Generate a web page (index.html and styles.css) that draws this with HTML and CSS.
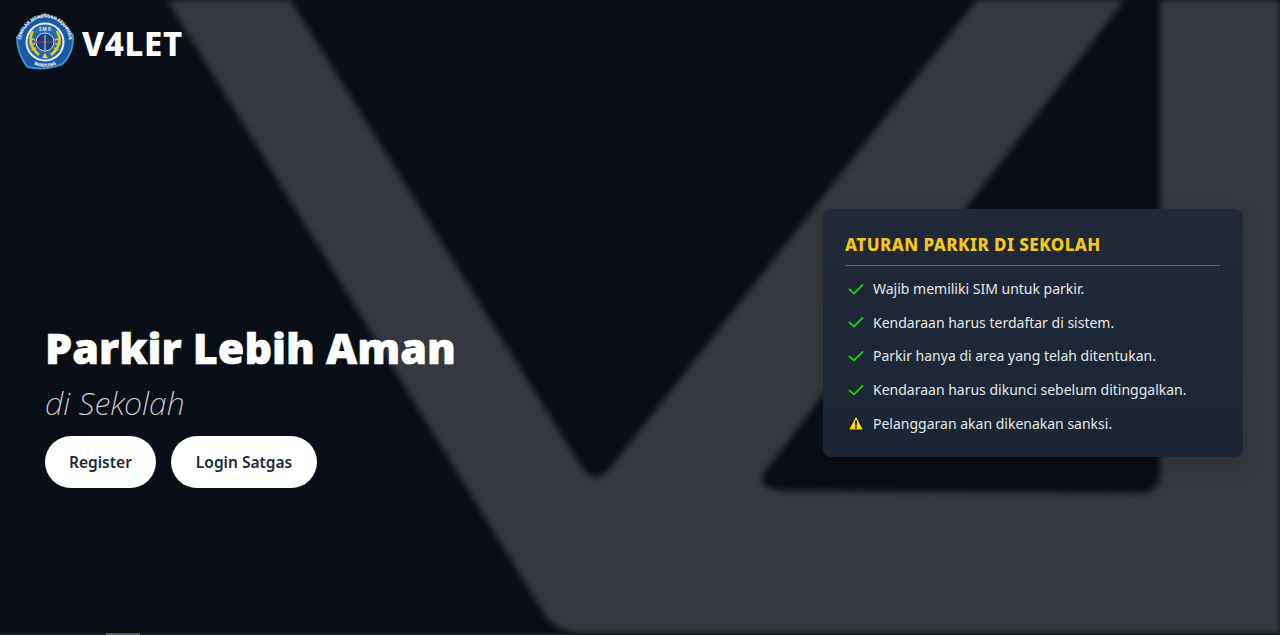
FILE: index.html
```html
<!DOCTYPE html>
<html>

<head>
    <title>V4LET</title>
    <meta charset="utf-8">
    <link rel="stylesheet" href="styles.css">
</head>

<body>
    <svg class="v4-backdrop" viewBox="0 0 1280 635" aria-hidden="true">
        <path d="M161 -10 L545 615 Q558 634 590 634 L1300 634 L1300 -10 L1160 -10 L1160 474 Q1159 493 1140 493 L785 491 Q752 488 766 470 L1132 -10 L985 -10 L612 466 Q596 488 581 466 L284 -10 Z" />
    </svg>

    <div class="v4-page">
        <header class="v4-nav">
            <svg class="v4-logo" viewBox="0 0 60 60">
                <defs>
                    <path id="logo-top" d="M9.5 42 A24 24 0 1 1 50.5 42" />
                    <path id="logo-bottom" d="M10 44.5 A24.5 24.5 0 0 0 50 44.5" />
                </defs>
                <path d="M30 1 Q48 7 59 23 Q60 41 48 53 Q30 60 12 56 Q1 42 1 25 Q12 8 30 1 Z" fill="#3f8fd2" />
                <path d="M30 3 Q47 9 57 24 Q58 40 47 51 Q30 58 13 54 Q3 41 3 26 Q13 10 30 3 Z" fill="#1b5aa3" />
                <text class="logo-ring-text"><textPath href="#logo-top" startOffset="50%" text-anchor="middle">SEKOLAH MENENGAH KEJURUAN</textPath></text>
                <text class="logo-ring-text"><textPath href="#logo-bottom" startOffset="50%" text-anchor="middle">BANDUNG</textPath></text>
                <circle cx="30" cy="30" r="19.5" fill="#e9eef2" />
                <circle cx="30" cy="30" r="17.5" fill="#2a68ad" />
                <path class="logo-wing" d="M18 19 Q11 32 24 43" />
                <path class="logo-wing" d="M42 19 Q49 32 36 43" />
                <path class="logo-feather" d="M14.5 26 L20 28 M14.5 32 L20 32 M16.5 38 L21 36" />
                <path class="logo-feather" d="M45.5 26 L40 28 M45.5 32 L40 32 M43.5 38 L39 36" />
                <circle cx="30" cy="30" r="9" fill="#173f7c" stroke="#cfe0ee" stroke-width="1" />
                <path d="M21 30 H39" stroke="#d0353f" stroke-width="1" />
                <path d="M30 23 V38" stroke="#cfe0ee" stroke-width="1" />
                <text class="logo-smk" x="30" y="19" text-anchor="middle">S M K</text>
                <path d="M27 46 H33 L30 41 Z" fill="#f1d62a" />
            </svg>
            <span class="v4-brand">V4LET</span>
        </header>

        <main class="v4-hero">
            <section class="v4-intro">
                <h1>Parkir Lebih Aman</h1>
                <p>di Sekolah</p>
                <div class="v4-actions">
                    <a class="v4-btn">Register</a>
                    <a class="v4-btn">Login Satgas</a>
                </div>
            </section>

            <aside class="v4-rules">
                <h3>ATURAN PARKIR DI SEKOLAH</h3>
                <ul>
                    <li>
                        <svg class="v4-icon" viewBox="0 0 16 16"><path class="icon-check-edge" d="M1.5 8.5 L6 12.5 L14.5 4" /><path class="icon-check" d="M1.5 8.5 L6 12.5 L14.5 4" /></svg>
                        Wajib memiliki SIM untuk parkir.
                    </li>
                    <li>
                        <svg class="v4-icon" viewBox="0 0 16 16"><path class="icon-check-edge" d="M1.5 8.5 L6 12.5 L14.5 4" /><path class="icon-check" d="M1.5 8.5 L6 12.5 L14.5 4" /></svg>
                        Kendaraan harus terdaftar di sistem.
                    </li>
                    <li>
                        <svg class="v4-icon" viewBox="0 0 16 16"><path class="icon-check-edge" d="M1.5 8.5 L6 12.5 L14.5 4" /><path class="icon-check" d="M1.5 8.5 L6 12.5 L14.5 4" /></svg>
                        Parkir hanya di area yang telah ditentukan.
                    </li>
                    <li>
                        <svg class="v4-icon" viewBox="0 0 16 16"><path class="icon-check-edge" d="M1.5 8.5 L6 12.5 L14.5 4" /><path class="icon-check" d="M1.5 8.5 L6 12.5 L14.5 4" /></svg>
                        Kendaraan harus dikunci sebelum ditinggalkan.
                    </li>
                    <li>
                        <svg class="v4-icon" viewBox="0 0 16 16"><path class="icon-warn" d="M8 .8 L15.6 15 H.4 Z" /><path class="icon-warn-mark" d="M8 5.5 V10.5 M8 11.6 V13.6" /></svg>
                        Pelanggaran akan dikenakan sanksi.
                    </li>
                </ul>
            </aside>
        </main>

        <div class="v4-scrollbar"><span></span></div>
    </div>
</body>

</html>
```

FILE: styles.css
```css
html,
body {
    height: 100%;
}

body {
    margin: 0;
    overflow: hidden;
    position: relative;
    background-color: #0a0e16;
    color: #fff;
    font-family: "Noto Sans", "Open Sans", sans-serif;
}

.v4-backdrop {
    position: absolute;
    top: 0;
    left: 0;
    width: 100%;
    height: 635px;
    fill: #35383f;
    filter: blur(3px);
}

.v4-page {
    position: relative;
    height: 635px;
    display: flex;
    flex-direction: column;
}

.v4-nav {
    display: flex;
    align-items: center;
    gap: 7px;
    padding: 12px 15px 0;
    height: 60px;
}

.v4-logo {
    width: 60px;
    height: 60px;
}

.logo-ring-text {
    font-size: 4.4px;
    font-weight: 700;
    fill: #fff;
}

.logo-smk {
    font-size: 4.5px;
    font-weight: 700;
    fill: #e9eef2;
}

.logo-wing,
.logo-feather {
    fill: none;
    stroke: #e6c81f;
}

.logo-wing {
    stroke-width: 2.6;
}

.logo-feather {
    stroke-width: 1.4;
}

.v4-brand {
    font-size: 33px;
    font-weight: 800;
    letter-spacing: .7px;
    margin-top: 2px;
}

.v4-hero {
    flex: 1;
    display: flex;
    justify-content: space-between;
    align-items: flex-start;
    padding: 137px 37px 0 45px;
}

.v4-intro {
    padding-top: 109px;
}

.v4-intro h1 {
    margin: 0;
    font-size: 43px;
    line-height: 60px;
    font-weight: 900;
    -webkit-text-stroke: .6px #fff;
}

.v4-intro p {
    margin: 1px 0 0;
    font-size: 32px;
    line-height: 48px;
    font-weight: 200;
    font-style: italic;
    color: #d5d8dc;
}

.v4-actions {
    display: flex;
    gap: 15px;
    margin-top: 9px;
}

.v4-btn {
    display: block;
    padding: 0 24px;
    height: 52px;
    line-height: 52px;
    border-radius: 26px;
    background-color: #fff;
    color: #1f2937;
    font-size: 15.5px;
    font-weight: 600;
}

.v4-btn + .v4-btn {
    padding: 0 25px;
}

.v4-rules {
    width: 420px;
    height: 248px;
    box-sizing: border-box;
    padding: 23px 23px 0 22px;
    background: linear-gradient(#212938, #1b2533);
    border-radius: 8px;
    box-shadow: 0 10px 25px rgba(0, 0, 0, .15);
}

.v4-rules h3 {
    margin: 0;
    padding-bottom: 7px;
    border-bottom: 1px solid #5b6270;
    font-size: 17px;
    line-height: 26px;
    font-weight: 800;
    letter-spacing: .45px;
    color: #f5c81e;
}

.v4-rules ul {
    margin: 6px 0 0;
    padding: 0;
    list-style: none;
}

.v4-rules li {
    display: flex;
    align-items: center;
    gap: 9px;
    height: 33.6px;
    font-size: 14px;
    color: #e5e7eb;
}

.v4-icon {
    width: 16px;
    height: 16px;
    margin-left: 3px;
    flex-shrink: 0;
}

.icon-check,
.icon-check-edge {
    fill: none;
    stroke-linecap: round;
}

.icon-check-edge {
    stroke: #08300f;
    stroke-width: 3.4;
}

.icon-check {
    stroke: #22c32a;
    stroke-width: 2;
}

.icon-warn {
    fill: #f6d90f;
    stroke: #111;
    stroke-width: 1;
    stroke-linejoin: round;
}

.icon-warn-mark {
    fill: none;
    stroke: #111;
    stroke-width: 1.8;
}

.v4-scrollbar {
    height: 2px;
    background-color: #1b1d22;
}

.v4-scrollbar span {
    display: block;
    width: 34px;
    height: 2px;
    margin-left: 106px;
    background-color: #5a5a5a;
}
```
